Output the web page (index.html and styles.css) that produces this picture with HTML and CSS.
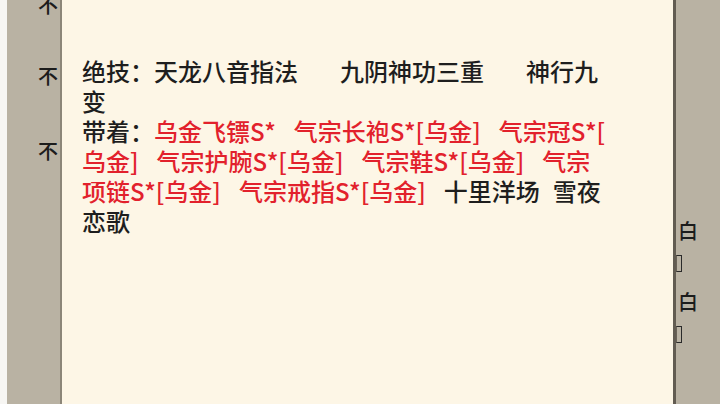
FILE: index.html
```html
<!DOCTYPE html>
<html lang="zh-CN">
<head>
<meta charset="utf-8">
<title>详情</title>
<link rel="stylesheet" href="styles.css">
</head>
<body>
<div class="screen">
  <div class="edge"></div>
  <div class="side side-left">
    <span class="ch ch-1">不</span>
    <span class="ch ch-2">不</span>
    <span class="ch ch-3">不</span>
  </div>
  <div class="panel">
    <div class="text">
      <div class="line">绝技：天龙八音指法<span class="term">九阴神功三重</span><span class="term">神行九</span></div>
      <div class="line">变</div>
      <div class="line">带着：<span class="red">乌金飞镖S*</span><span class="red sp">气宗长袍S*[乌金]</span><span class="red sp">气宗冠S*[</span></div>
      <div class="line"><span class="red">乌金]</span><span class="red sp">气宗护腕S*[乌金]</span><span class="red sp">气宗鞋S*[乌金]</span><span class="red sp">气宗</span></div>
      <div class="line"><span class="red">项链S*[乌金]</span><span class="red sp">气宗戒指S*[乌金]</span><span class="sp">十里洋场</span><span class="sp-s">雪夜</span></div>
      <div class="line">恋歌</div>
    </div>
  </div>
  <div class="side side-right">
    <span class="ch ch-r1">白</span>
    <span class="box box-1"></span>
    <span class="ch ch-r2">白</span>
    <span class="box box-2"></span>
  </div>
</div>
</body>
</html>
```

FILE: styles.css
```css
html, body {
  margin: 0;
  padding: 0;
  background: #ffffff;
}
.screen {
  width: 720px;
  height: 404px;
  display: flex;
  overflow: hidden;
  font-family: "Noto Sans CJK SC", "Noto Sans", sans-serif;
}
.edge {
  width: 7px;
  flex: none;
  background: #f7f6f3;
}
.side {
  flex: none;
  background: #b9b2a3;
  display: flex;
  flex-direction: column;
}
.side-left {
  width: 53px;
  align-items: flex-end;
  padding-right: 2px;
  box-sizing: border-box;
}
.side-right {
  flex: 1;
  align-items: flex-start;
}
.ch {
  display: block;
  font-size: 20px;
  line-height: 20px;
  font-weight: 500;
  color: #1c1c1c;
}
.ch-1 { margin-top: -5px; }
.ch-2 { margin-top: 51px; }
.ch-3 { margin-top: 55px; }
.ch-r1 { margin-top: 221px; margin-left: 2px; }
.ch-r2 { margin-top: 20px; margin-left: 2px; }
.box {
  display: block;
  width: 4px;
  height: 15px;
  border: 1.5px solid #2a2a2a;
  border-left-color: #6a6358;
}
.box-1 { margin-top: 14px; }
.box-2 { margin-top: 14px; }
.panel {
  width: 611px;
  flex: none;
  background: #fdf6e6;
  border-left: 2px solid #8c8679;
  border-right: 3px solid #625c52;
}
.text {
  padding: 56px 0 0 20px;
  font-size: 24px;
  line-height: 30px;
  font-weight: 500;
  color: #1e1e1e;
  white-space: nowrap;
}
.term { margin-left: 42px; }
.red { color: #e2212c; }
.sp { margin-left: 18px; }
.sp-s { margin-left: 13px; }
```
